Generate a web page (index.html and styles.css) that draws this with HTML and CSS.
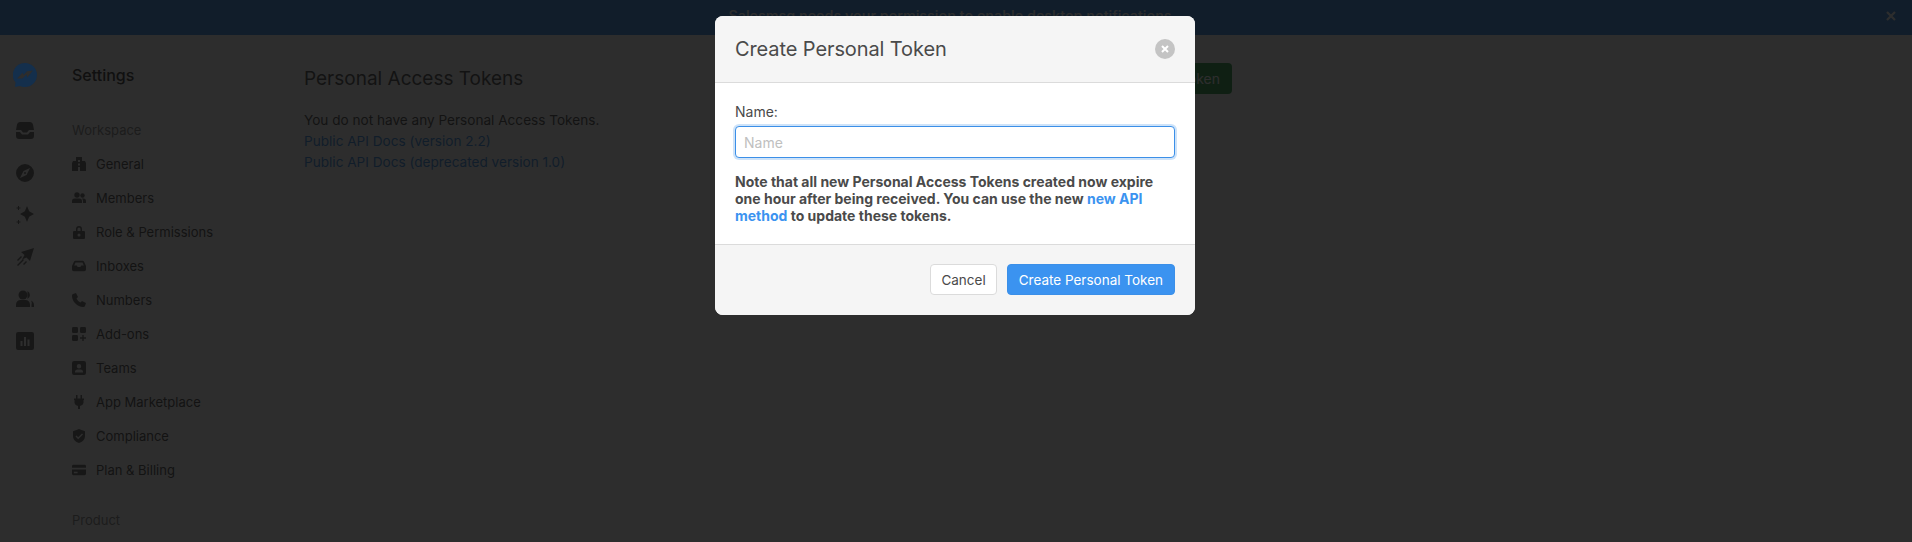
FILE: index.html
```html
<!DOCTYPE html>
<html>
<head>
<meta charset="UTF-8">
<title>Personal Access Tokens</title>
<link rel="stylesheet" href="styles.css">
</head>
<body>

<div class="banner">
    <span class="banner-text">Salesmsg needs your permission to enable desktop notifications</span>
    <svg class="banner-close" viewBox="0 0 10 10"><path d="M1 1l8 8M9 1l-8 8" stroke="#fff" stroke-width="2.200"/></svg>
</div>

<div class="layout">
    <div class="rail">
        <svg class="rail-logo" viewBox="0 0 24 24"><path d="M12 0a12 12 0 0 1 0 24c-2 0-3.600-.4-5-1.100L2 24l.6-4.400A12 12 0 0 1 12 0zM4 15.500l5.500 0 4-4 .8 3 5.700-7-6 .8-3.500 3.500-1-2z" fill="#142f4c" fill-rule="evenodd"/></svg>
        <div class="rail-icons">
            <svg viewBox="0 0 18 18"><path d="M4 0h10a3 3 0 0 1 3 2.500L18 8h-5l-2 2.500H7L5 8H0l1-5.500A3 3 0 0 1 4 0zM0 10h4l2 2.500h6L14 10h4v4a3 3 0 0 1-3 3H3a3 3 0 0 1-3-3z"/></svg>
            <svg viewBox="0 0 18 18"><path d="M9 0a9 9 0 1 1 0 18A9 9 0 0 1 9 0zm5 4L7.500 7 4 14l6.500-3zM9 8a1 1 0 1 1 0 2 1 1 0 0 1 0-2z" fill-rule="evenodd"/></svg>
            <svg viewBox="0 0 18 18"><path d="M11 0l2.200 5.300L18 8l-4.800 2.700L11 16l-2.200-5.300L4 8l4.800-2.700zM2 0h1v1.500h1.500v1H3V4H2V2.500H.5v-1H2zM2 14h1v1.500h1.500v1H3V18H2v-1.500H.5v-1H2z"/></svg>
            <svg viewBox="0 0 18 18"><path d="M18 0l-4 13-3.500-3.500L6 11.500 8.500 7 5 4zM1 12l4-4 1 1-4 4zM1 17l6-6 1 1-6 6zM7 16l3-3 1 1-3 3z"/></svg>
            <svg viewBox="0 0 18 18"><circle cx="7" cy="5" r="4.500"/><path d="M0 17v-2.500A4.500 4.500 0 0 1 4.500 10h5a4.500 4.500 0 0 1 4.500 4.500V17zM11.500 1a4.500 4.500 0 0 1 0 8zM15 10.500a5 5 0 0 1 3 4.500v2h-2.500v-2.500a5 5 0 0 0-.5-4z"/></svg>
            <svg viewBox="0 0 18 18"><path d="M2 0h14a2 2 0 0 1 2 2v14a2 2 0 0 1-2 2H2a2 2 0 0 1-2-2V2a2 2 0 0 1 2-2zm2.500 9v5h2V9zm3.500-4v9h2V5zm3.500 2.500V14h2V7.500z" fill-rule="evenodd"/></svg>
        </div>
    </div>

    <div class="settings">
        <h2 class="settings-title">Settings</h2>
        <div class="nav-label">Workspace</div>
        <ul class="nav">
            <li><svg viewBox="0 0 14 14"><path d="M4 0h6v4h3l1 2v8H0V6l1-2h3zM6 3v2h2V3zm0 3.500v2h2v-2zM6 10v4h2v-4z" fill-rule="evenodd"/></svg>General</li>
            <li><svg viewBox="0 0 14 14"><circle cx="5" cy="4" r="2.700"/><circle cx="10.500" cy="4.500" r="2.200"/><path d="M0 12V10a2.500 2.500 0 0 1 2.500-2.500h5A2.500 2.500 0 0 1 10 10v2zM11 12v-2a3.500 3.500 0 0 0-1-2.500h1.500A2.500 2.500 0 0 1 14 10v2z"/></svg>Members</li>
            <li><svg viewBox="0 0 14 14"><path d="M4 6V4a3 3 0 0 1 6 0v2h2a1 1 0 0 1 1 1v6a1 1 0 0 1-1 1H2a1 1 0 0 1-1-1V7a1 1 0 0 1 1-1zm1.500 0h3V4a1.500 1.500 0 0 0-3 0zM7 8.500a1.500 1.500 0 1 0 0 3 1.500 1.500 0 0 0 0-3z" fill-rule="evenodd"/></svg>Role &amp; Permissions</li>
            <li><svg viewBox="0 0 16 14"><path d="M4 1h8a2 2 0 0 1 1.800 1.200L16 7v4a2 2 0 0 1-2 2H2a2 2 0 0 1-2-2V7l2.200-4.800A2 2 0 0 1 4 1zm0 2L2.500 6.500h3l1 1.500h3l1-1.500h3L12 3z" fill-rule="evenodd"/></svg>Inboxes</li>
            <li><svg viewBox="0 0 14 14"><path d="M1 1l3-1 2 4-1.500 1.500a8 8 0 0 0 4 4L10 8l4 2-1 3c-.3.700-1 1-2 1C5.500 14 0 8.500 0 3c0-1 .3-1.700 1-2z"/></svg>Numbers</li>
            <li><svg viewBox="0 0 14 14"><rect width="6" height="6" rx="1.200"/><rect x="8" width="6" height="6" rx="1.200"/><rect y="8" width="6" height="6" rx="1.200"/><path d="M10.300 8h1.400v2.300H14v1.400h-2.300V14h-1.400v-2.300H8v-1.400h2.300z"/></svg>Add-ons</li>
            <li><svg viewBox="0 0 14 14"><path d="M2 0h10a2 2 0 0 1 2 2v10a2 2 0 0 1-2 2H2a2 2 0 0 1-2-2V2a2 2 0 0 1 2-2zm5 3a2.200 2.200 0 1 0 0 4.400A2.200 2.200 0 0 0 7 3zM3 11.500h8V11a2.500 2.500 0 0 0-2.500-2.500h-3A2.500 2.500 0 0 0 3 11z" fill-rule="evenodd"/></svg>Teams</li>
            <li><svg viewBox="0 0 14 14"><path d="M4 0h1.500v3.500h3V0H10v3.500h2V5h-.5v3a4 4 0 0 1-3.500 3v3H6v-3a4 4 0 0 1-3.500-3V5H2V3.500h2z"/></svg>App Marketplace</li>
            <li><svg viewBox="0 0 14 14"><path d="M7 0l6 2.200V7c0 3.500-2.500 6-6 7-3.500-1-6-3.500-6-7V2.200zm3 4.500L6.200 8.200 4.500 6.500l-1 1 2.700 2.700 4.800-4.700z" fill-rule="evenodd"/></svg>Compliance</li>
            <li><svg viewBox="0 0 15 14"><path d="M1.500 1.500h12A1.500 1.500 0 0 1 15 3v1.500H0V3a1.500 1.500 0 0 1 1.500-1.500zM0 6.500h15V11a1.500 1.500 0 0 1-1.500 1.500h-12A1.500 1.500 0 0 1 0 11zm2 2.500v1.500h4V9z" fill-rule="evenodd"/></svg>Plan &amp; Billing</li>
        </ul>
        <div class="nav-label nav-label-product">Product</div>
    </div>

    <div class="main">
        <div class="main-head">
            <h1 class="main-title">Personal Access Tokens</h1>
            <a class="btn-green">Create Personal Token</a>
        </div>
        <p>You do not have any Personal Access Tokens.</p>
        <p><a class="doc-link">Public API Docs (version 2.2)</a></p>
        <p><a class="doc-link">Public API Docs (deprecated version 1.0)</a></p>
    </div>
</div>

<div class="overlay">
    <div class="modal">
        <div class="modal-head">
            <span class="modal-title">Create Personal Token</span>
            <span class="modal-close"><svg viewBox="0 0 10 10"><path d="M2 2l6 6M8 2l-6 6" stroke="#fff" stroke-width="2"/></svg></span>
        </div>
        <div class="modal-body">
            <label class="field-label" for="tokenName">Name:</label>
            <input id="tokenName" class="field-input" type="text" placeholder="Name">
            <p class="note">Note that all new Personal Access Tokens created now expire one hour after being received. You can use the new <a class="note-link">new API method</a> to update these tokens.</p>
        </div>
        <div class="modal-foot">
            <button class="btn btn-cancel">Cancel</button>
            <button class="btn btn-primary">Create Personal Token</button>
        </div>
    </div>
</div>

</body>
</html>
```

FILE: styles.css
```css
* {
    box-sizing: border-box;
}

html, body {
    margin: 0;
    height: 100%;
    overflow: hidden;
}

body {
    position: relative;
    background: #fff;
    color: #4a4a4a;
    font-family: Inter, "Liberation Sans", sans-serif;
    font-size: 14px;
    line-height: 21px;
}

.banner {
    height: 35px;
    background: #3b8fe8;
    position: relative;
    text-align: center;
    padding: 5px 12px 0 0;
    font-size: 14.400px;
    font-weight: 500;
}

.banner-text {
    color: #fff;
}

.banner-close {
    position: absolute;
    right: 16px;
    top: 11px;
    width: 10px;
    height: 10px;
}

.layout {
    display: flex;
    height: 507px;
}

/* icon rail */
.rail {
    width: 50px;
    padding-top: 28px;
    display: flex;
    flex-direction: column;
    align-items: center;
}

.rail-logo {
    position: relative;
    z-index: 2;
    width: 24px;
    height: 24px;
}

.rail-icons {
    margin-top: 35px;
    display: flex;
    flex-direction: column;
    gap: 24px;
}

.rail-icons svg {
    display: block;
    width: 18px;
    height: 18px;
    fill: #666;
}

/* settings nav */
.settings {
    width: 254px;
    padding: 28px 0 0 22px;
}

.settings-title {
    margin: 0;
    font-size: 16px;
    line-height: 24px;
    font-weight: 500;
    color: #333;
}

.nav-label {
    margin-top: 33px;
    font-size: 13px;
    line-height: 20px;
    color: #888;
}

.nav-label-product {
    margin-top: 23px;
}

.nav {
    list-style: none;
    margin: 7px 0 0;
    padding: 0;
}

.nav li {
    height: 34px;
    display: flex;
    align-items: center;
    gap: 10px;
    font-size: 13px;
}

.nav svg {
    width: 14px;
    height: 14px;
    fill: #666;
    flex: none;
}

/* main column */
.main {
    width: 928px;
    padding-top: 28px;
    font-size: 13.600px;
}

.main-head {
    display: flex;
    justify-content: space-between;
    align-items: flex-start;
    margin-bottom: 16px;
}

.main-title {
    margin: 2px 0 0;
    font-size: 19px;
    line-height: 28px;
    font-weight: 400;
}

.btn-green {
    height: 31px;
    padding: 0 12px;
    background: #2c9a4a;
    color: #fff;
    border-radius: 4px;
    font-size: 14px;
    line-height: 31px;
}

.main p {
    margin: 0;
}

.doc-link {
    color: #3b8fe8;
}

/* modal */
.overlay {
    position: absolute;
    inset: 0;
    background: rgba(10, 10, 10, 0.86);
    display: flex;
    justify-content: center;
    align-items: flex-start;
    padding: 16px 2px 0 0;
}

.modal {
    width: 480px;
    border-radius: 8px;
    overflow: hidden;
    background: #fff;
    color: #4a4a4a;
}

.modal-head {
    height: 67px;
    padding: 0 20px;
    background: #f5f5f5;
    border-bottom: 1px solid #dbdbdb;
    display: flex;
    align-items: center;
    justify-content: space-between;
}

.modal-title {
    font-size: 20px;
    line-height: 28px;
    letter-spacing: -0.1px;
}

.modal-close {
    width: 20px;
    height: 20px;
    border-radius: 50%;
    background: #c4c4c4;
    display: flex;
    align-items: center;
    justify-content: center;
}

.modal-close svg {
    width: 10px;
    height: 10px;
}

.modal-body {
    height: 161px;
    padding: 18px 20px 0;
}

.field-label {
    display: block;
    font-size: 14px;
    line-height: 21px;
    margin-bottom: 4px;
}

.field-input {
    display: block;
    width: 100%;
    height: 32px;
    padding: 0 8px;
    border: 1px solid #3b8fe8;
    border-radius: 4px;
    box-shadow: 0 0 0 2px rgba(59, 143, 232, 0.25);
    font-family: inherit;
    font-size: 14px;
    outline: none;
}

.field-input::placeholder {
    color: #c0c0c0;
}

.note {
    margin: 15px 0 0;
    font-size: 14px;
    line-height: 17px;
    font-weight: 700;
}

.note-link {
    color: #3b93f0;
}

.modal-foot {
    height: 71px;
    padding: 19px 20px 0;
    background: #f5f5f5;
    border-top: 1px solid #dbdbdb;
    display: flex;
    justify-content: flex-end;
    gap: 10px;
}

.btn {
    height: 31px;
    border-radius: 4px;
    font-family: inherit;
    font-size: 13.500px;
    padding: 0 11px;
}

.btn-cancel {
    background: #fff;
    border: 1px solid #dbdbdb;
    color: #4a4a4a;
    padding: 0 10px;
}

.btn-primary {
    background: #3b93f0;
    border: 1px solid #3b8fe8;
    color: #fff;
}
```
